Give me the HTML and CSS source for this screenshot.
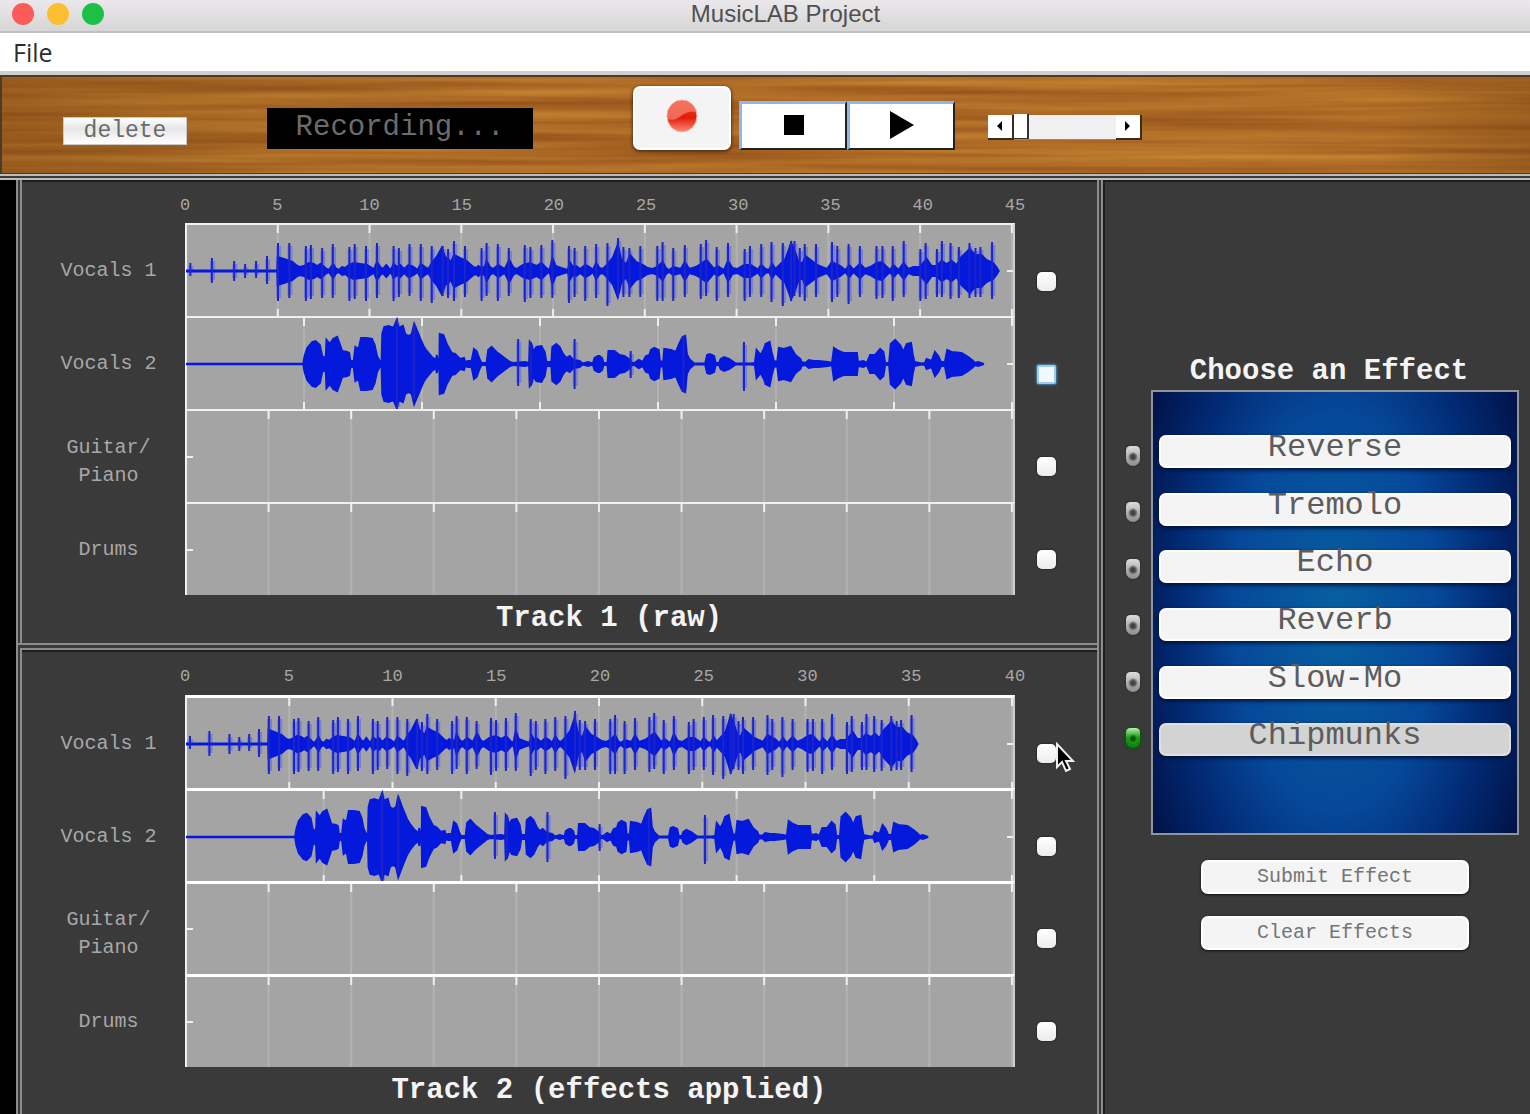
FILE: index.html
```html
<!DOCTYPE html>
<html lang="en">
<head>
<meta charset="utf-8">
<title>MusicLAB Project</title>
<link rel="stylesheet" href="styles.css">
</head>
<body>
<div class="app">
  <header class="titlebar">
    <div class="lights"><span class="light light-red"></span><span class="light light-yellow"></span><span class="light light-green"></span></div>
    <h1 class="app-title">MusicLAB Project</h1>
  </header>
  <nav class="menubar"><button class="menu-item" type="button">File</button></nav>

  <section class="toolbar" aria-label="Transport">
    <svg class="wood" aria-hidden="true">
      <defs>
        <linearGradient id="shade"><stop offset="0" stop-color="#6b3a0c" stop-opacity=".35"/><stop offset=".35" stop-color="#6b3a0c" stop-opacity="0"/><stop offset=".9" stop-color="#6b3a0c" stop-opacity="0"/><stop offset="1" stop-color="#6b3a0c" stop-opacity=".3"/></linearGradient>
        <filter id="grain" x="0" y="0" width="100%" height="100%" color-interpolation-filters="sRGB">
          <feTurbulence type="fractalNoise" baseFrequency="0.002 0.09" numOctaves="3" seed="7"/>
          <feColorMatrix values="0.34 0 0 0 0.51  0.34 0 0 0 0.25  0.16 0 0 0 0.07  0 0 0 0 1"/>
        </filter>
      </defs>
      <rect width="100%" height="100%" filter="url(#grain)"/>
      <rect width="100%" height="100%" fill="url(#shade)"/>
    </svg>
    <button class="delete" type="button">delete</button>
    <output class="status">Recording...</output>
    <div class="transport">
      <button class="record" type="button" aria-label="Record">
        <svg width="34" height="36" viewBox="0 0 34 36">
          <defs><linearGradient id="rec" x1="0" y1="0" x2="0" y2="1"><stop offset="0" stop-color="#f0503c"/><stop offset=".55" stop-color="#e01c08"/><stop offset="1" stop-color="#ff8a78"/></linearGradient></defs>
          <ellipse cx="17" cy="18" rx="15" ry="16" fill="url(#rec)" stroke="#f7b5ac"/>
          <path d="M3 21C2 8 9 3 17 3c8 0 13 5 14 11-8-1-11 1-15 4-4 3-8 5-13 3z" fill="#f7806e" opacity=".75"/>
        </svg>
      </button>
      <div class="pair">
        <button class="key" type="button" aria-label="Stop"><svg width="20" height="20"><rect width="20" height="20"/></svg></button>
        <button class="key" type="button" aria-label="Play"><svg width="26" height="28"><path d="M1 0v28L25 14z"/></svg></button>
      </div>
    </div>
    <div class="scroll">
      <button class="arrow" type="button" aria-label="Back"><svg width="6" height="10"><path d="M5 0v10L0 5z"/></svg></button>
      <input class="scroll-range" type="range" min="0" max="100" value="0" aria-label="Position">
      <button class="arrow" type="button" aria-label="Forward"><svg width="6" height="10"><path d="M0 0v10l5-5z"/></svg></button>
    </div>
  </section>

  <main class="workspace">
    <div class="tracks">
      <section class="track">
        <div class="ruler"><span>0</span><span>5</span><span>10</span><span>15</span><span>20</span><span>25</span><span>30</span><span>35</span><span>40</span><span>45</span></div>
        <div class="lanes">
          <div class="lane">
            <label class="lane-name" for="t1v1">Vocals 1</label>
            <div class="plot div-9"><svg class="wave wave-full" data-wave="vocals1"></svg></div>
            <div class="pick"><input id="t1v1" type="checkbox"></div>
          </div>
          <div class="lane">
            <label class="lane-name" for="t1v2">Vocals 2</label>
            <div class="plot div-7"><svg class="wave wave-full" data-wave="vocals2"></svg></div>
            <div class="pick"><input id="t1v2" class="focused" type="checkbox"></div>
          </div>
          <div class="lane">
            <label class="lane-name lane-two" for="t1g">Guitar/<br>Piano</label>
            <div class="plot plot-empty"></div>
            <div class="pick"><input id="t1g" type="checkbox"></div>
          </div>
          <div class="lane">
            <label class="lane-name" for="t1d">Drums</label>
            <div class="plot plot-empty"></div>
            <div class="pick"><input id="t1d" type="checkbox"></div>
          </div>
        </div>
        <h2 class="track-title">Track 1 (raw)</h2>
      </section>
      <section class="track track-second">
        <div class="ruler"><span>0</span><span>5</span><span>10</span><span>15</span><span>20</span><span>25</span><span>30</span><span>35</span><span>40</span></div>
        <div class="lanes">
          <div class="lane">
            <label class="lane-name" for="t2v1">Vocals 1</label>
            <div class="plot div-8"><svg class="wave wave-short" data-wave="vocals1"></svg></div>
            <div class="pick"><input id="t2v1" type="checkbox">
              <svg class="cursor" width="20" height="32" viewBox="0 0 20 32" aria-hidden="true"><path d="M2 2v23l5-5 4 9 4-2-4-8h7z" fill="#000" stroke="#eee" stroke-width="2"/></svg>
            </div>
          </div>
          <div class="lane">
            <label class="lane-name" for="t2v2">Vocals 2</label>
            <div class="plot div-6"><svg class="wave wave-medium" data-wave="vocals2"></svg></div>
            <div class="pick"><input id="t2v2" type="checkbox"></div>
          </div>
          <div class="lane">
            <label class="lane-name lane-two" for="t2g">Guitar/<br>Piano</label>
            <div class="plot plot-empty"></div>
            <div class="pick"><input id="t2g" type="checkbox"></div>
          </div>
          <div class="lane">
            <label class="lane-name" for="t2d">Drums</label>
            <div class="plot plot-empty"></div>
            <div class="pick"><input id="t2d" type="checkbox"></div>
          </div>
        </div>
        <h2 class="track-title">Track 2 (effects applied)</h2>
      </section>
    </div>

    <aside class="effects">
      <h2 class="effects-title">Choose an Effect</h2>
      <div class="leds">
        <input type="radio" name="fx" aria-label="Reverse">
        <input type="radio" name="fx" aria-label="Tremolo">
        <input type="radio" name="fx" aria-label="Echo">
        <input type="radio" name="fx" aria-label="Reverb">
        <input type="radio" name="fx" aria-label="Slow-Mo">
        <input type="radio" name="fx" aria-label="Chipmunks" checked>
      </div>
      <div class="fx-panel">
        <button class="fx" type="button">Reverse</button>
        <button class="fx" type="button">Tremolo</button>
        <button class="fx" type="button">Echo</button>
        <button class="fx" type="button">Reverb</button>
        <button class="fx" type="button">Slow-Mo</button>
        <button class="fx fx-on" type="button">Chipmunks</button>
      </div>
      <div class="fx-actions">
        <button class="action" type="button">Submit Effect</button>
        <button class="action" type="button">Clear Effects</button>
      </div>
    </aside>
  </main>
</div>
<script src="waves.js"></script>
</body>
</html>
```

FILE: styles.css
```css
* { box-sizing: border-box; }
body {
  margin: 0;
  background: #3a3a3a;
  font-family: "Liberation Mono", "Courier New", monospace;
  color: #a8a8a8;
}
button, input { margin: 0; padding: 0; font: inherit; color: inherit; }
button { border: 0; background: none; }
svg { display: block; }

.app { min-height: 100vh; display: flex; flex-direction: column; }

/* window chrome */
.titlebar {
  display: grid;
  grid-template-columns: 1fr auto 1fr;
  align-items: center;
  height: 33px;
  padding: 0 12px 4px 12px;
  background: linear-gradient(#ebe8eb, #d6d6d6);
  border-bottom: 2px solid #c0c0c0;
}
.lights { display: flex; gap: 13px; }
.light { width: 22px; height: 22px; border-radius: 50%; }
.light-red { background: #fc5b57; }
.light-yellow { background: #fdbe2f; }
.light-green { background: #1cc045; }
.app-title {
  margin: 0 0 0 41px;
  font: 24px/26px "Liberation Sans", Arial, sans-serif;
  color: #505050;
}
.menubar {
  display: flex;
  height: 42px;
  padding-left: 13px;
  background: #fff;
  border-bottom: 4px solid #cfcfcf;
}
.menu-item { font: 25px/34px "Open Sans", sans-serif; color: #2c2c2c; }

/* transport */
.toolbar {
  position: relative;
  display: flex;
  align-items: center;
  height: 99px;
  padding-left: 61px;
  border: 2px solid #4b3c2a;
  border-right: 0;
  border-bottom-width: 1px;
}
.wood { position: absolute; inset: 0; width: 100%; height: 100%; z-index: -1; }
.delete {
  width: 124px;
  height: 28px;
  margin-top: 12px;
  border: 1px solid #c9c9c9;
  background: linear-gradient(#fff, #e6e6e6 40%, #fff);
  font-size: 23px;
  line-height: 22px;
  color: #6a6a6a;
}
.status {
  width: 266px;
  height: 41px;
  margin: 6px 0 0 80px;
  background: #000;
  font-size: 29px;
  line-height: 40px;
  text-align: center;
  color: #6c6c6c;
}
.transport { display: flex; align-items: center; gap: 8px; margin-left: 100px; }
.record {
  display: grid;
  place-items: center;
  width: 98px;
  height: 64px;
  margin-bottom: 14px;
  padding-bottom: 4px;
  border: 2px solid #fff;
  border-radius: 7px;
  background: #f4f4f4;
  box-shadow: 0 1px 3px 1px rgba(40, 20, 0, .6);
}
.pair { display: flex; }
.key {
  display: grid;
  place-items: center;
  width: 108px;
  height: 49px;
  padding-bottom: 2px;
  border: 3px solid;
  border-color: #8fb4ee #222 #222 #8fb4ee;
  border-right-width: 2px;
  border-bottom-width: 2px;
  background: #fff;
}
.scroll { display: flex; width: 154px; height: 25px; margin: 4px 0 0 33px; }
.arrow {
  display: grid;
  place-items: center;
  width: 26px;
  background: #fff;
  border: solid #3a2d1e;
  border-width: 0 2px 2px 0;
}
.scroll-range {
  appearance: none;
  flex: 1;
  min-width: 0;
  height: 25px;
  background: #f0f0f2;
  border-bottom: 1px solid #8a8a8a;
}
.scroll-range::-webkit-slider-thumb {
  appearance: none;
  width: 15px;
  height: 25px;
  background: #fff;
  border: solid #333;
  border-width: 0 2px 1px 0;
}

/* workspace */
.workspace {
  flex: 1;
  display: grid;
  grid-template-columns: minmax(0, 1fr) 433px;
  border-top: 6px double #b9bcbe;
  background: #3a3a3a;
}
.tracks { border-left: 16px solid #000; display: flex; flex-direction: column; }
.track {
  padding-left: 1px;
  border-left: 6px double #8c8c8c;
  box-shadow: inset 0 2px 0 #1e1e1e;
}
.track-second { flex: 1; border-top: 7px double #8c8c8c; }
.ruler {
  display: flex;
  justify-content: space-between;
  margin: 0 82px 0 162px;
  padding: 15px 0 6px;
  font-size: 17px;
  line-height: 22px;
}
.track-second .ruler { padding: 16px 0 7px; }
.ruler span { display: flex; justify-content: center; width: 0; }
.lanes { display: flex; flex-direction: column; }
.lane { display: grid; grid-template-columns: 162px minmax(0, 1fr) 82px; height: 93px; }
.lane-name {
  align-self: center;
  padding: 2px 0 0 9px;
  font-size: 20px;
  line-height: 28px;
  text-align: center;
}
.lane-two { padding-top: 12px; }
.plot {
  position: relative;
  border-top: 2px solid #f0f0f0;
  border-left: 2px solid #f0f0f0;
  border-right: 2px solid #cfcfcf;
  background-color: #a4a4a4;
  background-image:
    linear-gradient(#eee, #eee), linear-gradient(#eee, #eee),
    linear-gradient(to left, #eee 2px, transparent 2px),
    linear-gradient(to left, #eee 2px, transparent 2px),
    linear-gradient(to left, #b2b2b2 2px, transparent 2px);
  background-repeat: no-repeat, no-repeat, repeat-x, repeat-x, repeat-x;
  background-position: left center, right center, left top, left bottom, left top;
  background-size: 6px 2px, 6px 2px, var(--step) 8px, var(--step) 8px, var(--step) 100%;
}
.track-second .plot { border-top-width: 3px; border-top-color: #fff; }
.div-6 { --step: calc(100% / 6); }
.div-7 { --step: calc(100% / 7); }
.div-8 { --step: calc(100% / 8); }
.div-9 { --step: calc(100% / 9); }
.plot-empty { --step: calc(100% / 10); background-size: 6px 2px, 0 0, var(--step) 8px, 0 0, var(--step) 100%; }
.wave { height: 92px; overflow: visible; }
.wave-full { width: 100%; }
.wave-medium { width: 93%; }
.wave-short { width: 90%; }
.wave path { vector-effect: non-scaling-stroke; }
.wave-body { fill: #0519dc; stroke: #0519dc; stroke-width: 2px; }
.wave-halo { fill: none; stroke: #6a72dd; stroke-width: 5px; opacity: .7; }
.wave-spike { fill: none; stroke: #1c25c8; stroke-width: 2px; }
.pick { position: relative; display: grid; justify-items: center; align-content: center; padding: 22px 19px 0 0; }
.pick input {
  appearance: none;
  width: 19px;
  height: 19px;
  border-radius: 5px;
  background: linear-gradient(#fff, #ececec);
  box-shadow: 0 0 2px #111;
}
.pick .focused { border-radius: 2px; border: 2px solid #9fcbee; background: #f2f8fd; box-shadow: 0 0 2px 1px #4583b0; }
.cursor { position: absolute; left: 40px; top: 47px; }
.track-title {
  margin: 0;
  padding: 0 45px 0 143px;
  font-size: 29px;
  line-height: 48px;
  text-align: center;
  color: #f4f4f4;
}

/* effects column */
.effects {
  display: grid;
  grid-template-columns: 14px minmax(0, 1fr);
  column-gap: 11px;
  align-content: start;
  padding: 174px 11px 0 23px;
  border-left: 6px double #8c8c8c;
  box-shadow: inset 2px 2px 0 #1e1e1e;
}
.effects-title {
  grid-column: 2;
  margin: 0;
  padding-right: 12px;
  font-size: 29px;
  line-height: 36px;
  text-align: center;
  color: #f4f4f4;
}
.leds {
  display: flex;
  flex-direction: column;
  justify-content: space-between;
  height: 302px;
  margin-top: 56px;
}
.leds input {
  appearance: none;
  width: 14px;
  height: 20px;
  border-radius: 5px 5px 8px 8px;
  background: radial-gradient(circle at 50% 55%, #444 2px, #888 4px, transparent 5px), linear-gradient(#ddd, #8a8a8a);
  box-shadow: 0 0 2px #222;
}
.leds input:checked {
  background: radial-gradient(circle at 50% 55%, #0a5a0a 2px, #1fa01c 4px, transparent 5px), linear-gradient(#b9efae, #129a10 50%, #0d800c);
  box-shadow: 0 0 3px 1px #0a5a08;
}
.fx-panel {
  display: grid;
  grid-auto-rows: 1fr;
  height: 445px;
  padding: 43px 6px 52px;
  border: 2px solid #90959c;
  background: radial-gradient(ellipse 62% 100% at 50% 50%, #07609f, #06489a 45%, #022a74 70%, #010d3e);
}
.fx {
  height: 33px;
  border: 2px solid #fff;
  border-radius: 7px;
  background: #f4f4f4;
  box-shadow: 0 2px 4px #011038;
  padding-bottom: 8px;
  font-size: 32px;
  line-height: 22px;
  color: #5c5c5c;
}
.fx-on { background: #d3d3d3; border-color: #e0e0e0; }
.fx-actions { grid-column: 2; display: grid; gap: 22px; justify-content: center; margin-top: 25px; }
.action {
  width: 268px;
  height: 34px;
  border: 2px solid #fff;
  border-radius: 7px;
  background: #f4f4f4;
  box-shadow: 0 1px 3px #111;
  font-size: 20px;
  line-height: 28px;
  color: #757575;
}
```

FILE: waves.js
```js
// Each clip has an outline (pairs of position, half height) and peaks
// (position, rise, fall). Positions in the second part start at 1260.
const SPAN = 2487, START = 18, PART = 1260;

const clips = {
  vocals1: {
    body: [
      [18,.5,290,.5,291,14,310,12,335,9,350,5,358,4,370,5,385,8,400,7,410,5,420,7,435,3,445,1,458,7,465,3,475,1,485,4,495,3,505,6,520,8,540,7,560,6,575,3,580,1,590,9,600,4,608,2,618,6,628,2,632,1,640,7,650,4,660,6,672,2,685,6,700,4,712,1,722,7,735,4,745,2,755,8,770,14,785,23,795,14,805,12,812,8,822,16,840,13,860,10,880,4,890,3,895,5,905,3,915,4,920,10,930,4,940,2,955,6,965,4,975,2,988,11,1000,4,1010,2,1030,6,1050,8,1070,5,1085,8,1100,3,1110,1,1118,13,1128,5,1145,3,1155,2,1165,1,1170,9,1180,4,1190,5,1202,2,1217,6,1230,4,1240,1,1250,8],
      [0,3,10,2,22,6,40,13,55,26,65,12,80,6,92,16,110,9,130,6,145,3,160,2,175,4,190,9,200,3,210,1,222,4,245,2,257,9,270,2,290,4,305,7,322,11,335,6,345,2,355,5,375,1,387,10,400,3,415,2,435,6,455,6,470,3,475,1,487,6,500,2,510,1,520,7,530,2,545,7,560,12,577,28,590,18,600,8,612,8,620,15,640,10,655,6,670,4,685,2,700,9,725,5,740,1,752,6,765,1,784,7,800,2,815,4,835,8,850,9,865,4,875,1,885,6,900,1,916,8,930,2,945,4,965,4,985,12,1000,5,1015,5,1030,10,1045,7,1060,10,1075,6,1090,14,1115,22,1130,16,1150,16,1165,11,1185,8,1195,4,1202,0]
    ],
    peaks: [
      [28,8,5,93,13,12,160,10,10,193,7,7,226,10,7,259,15,13,292,28,30,326,28,27,376,25,30,391,26,28,425,23,27,457,27,27,507,24,30,523,27,28,557,25,30,590,28,27,640,25,30,656,23,26,688,27,25,722,27,30,755,25,32,788,25,25,804,22,27,822,30,30,855,25,26,905,23,30,920,28,25,954,27,30,987,23,25,1035,26,31,1052,24,27,1085,26,27,1118,31,27,1168,25,32,1185,23,26,1217,25,30,1250,27,27],
      [24,28,35,56,33,25,72,24,26,90,23,26,123,25,26,174,25,30,190,29,30,222,23,30,257,26,26,305,27,28,321,31,25,353,24,30,387,28,26,437,22,30,453,25,26,487,27,26,518,29,31,552,28,35,577,30,30,587,30,25,603,23,26,618,27,30,652,27,26,700,29,31,716,25,26,750,27,33,784,25,26,834,25,28,852,25,27,883,25,30,916,30,26,966,22,30,982,28,28,1016,22,26,1031,30,26,1057,28,28,1082,24,27,1114,28,27,1132,23,26,1147,24,26,1182,29,28]
    ]
  },
  vocals2: {
    body: [
      [18,.2,368,.2,372,8,380,16,395,22,405,23,418,19,425,8,430,6,436,8,438,24,448,20,458,25,470,27,478,20,485,13,500,12,506,11,510,3,520,3,525,17,535,15,542,26,558,26,575,25,583,19,590,8,598,3,604,3,606,30,612,37,625,38,640,36,650,44,655,36,668,38,675,30,685,28,695,30,702,40,712,32,722,24,730,18,740,13,755,7,768,4,770,9,773,3,778,4,779,30,790,29,800,20,815,11,825,10,840,5,852,6,856,2,864,3,875,3,882,15,890,13,900,4,905,1,920,1,925,14,935,17,950,12,970,7,990,2,1000,1,1035,2,1048,1,1050,22,1055,20,1060,12,1070,17,1085,18,1095,12,1100,2,1115,2,1118,17,1130,20,1140,17,1150,10,1160,6,1170,8,1182,4,1200,3,1210,.5,1225,2,1240,.5,1245,6,1255,8],
      [0,8,8,6,12,1,24,1,27,13,45,13,60,9,75,8,88,5,98,1,105,1,118,4,130,2,140,8,150,9,155,14,165,16,178,14,182,2,192,3,195,15,215,14,230,12,240,20,250,27,258,28,263,10,270,5,285,.5,318,.5,324,9,332,10,345,8,350,1,360,1,365,5,375,7,390,5,410,.5,455,.5,468,1,473,14,485,9,495,15,500,20,512,22,518,12,525,3,535,2,540,16,555,15,575,17,590,9,605,5,608,2,620,1,630,4,645,3,660,3,688,2,700,1,706,16,720,13,735,11,755,11,775,11,778,2,795,3,805,1,815,9,830,9,845,15,855,12,860,1,872,1,877,20,890,24,905,19,915,12,925,20,938,21,943,10,948,2,970,.5,980,1,985,5,1000,3,1010,12,1020,8,1028,2,1040,2,1047,14,1060,12,1090,11,1110,7,1125,3,1130,1,1140,2,1155,.2]
    ],
    peaks: [
      [650,44,46,702,41,35,1015,25,22,1053,22,22,1185,25,25],
      [94,13,14,253,28,28,435,22,27]
    ]
  }
};

function points(parts, size) {
  const list = [];
  parts.forEach((part, n) => {
    for (let i = 0; i < part.length; i += size) {
      const item = part.slice(i, i + size);
      item[0] += n * PART;
      list.push(item);
    }
  });
  return list;
}

function addPath(svg, name, d) {
  const path = document.createElementNS('http://www.w3.org/2000/svg', 'path');
  path.setAttribute('class', name);
  path.setAttribute('d', d);
  svg.append(path);
}

document.querySelectorAll('[data-wave]').forEach(svg => {
  const clip = clips[svg.dataset.wave];
  svg.setAttribute('viewBox', `${START} -46 ${SPAN} 92`);
  svg.setAttribute('preserveAspectRatio', 'none');
  const body = points(clip.body, 2);
  const upper = body.map(([x, a]) => `${x} ${-a}`);
  const lower = body.map(([x, a]) => `${x} ${a}`).reverse();
  const spikes = points(clip.peaks, 3);
  addPath(svg, 'wave-halo', spikes.map(([x, u, l]) => `M${x + 2} ${3 - u}V${l - 3}`).join(''));
  addPath(svg, 'wave-body', `M${upper.concat(lower).join('L')}Z`);
  addPath(svg, 'wave-spike', spikes.map(([x, u, l]) => `M${x} ${-u}V${l}`).join(''));
});
```
